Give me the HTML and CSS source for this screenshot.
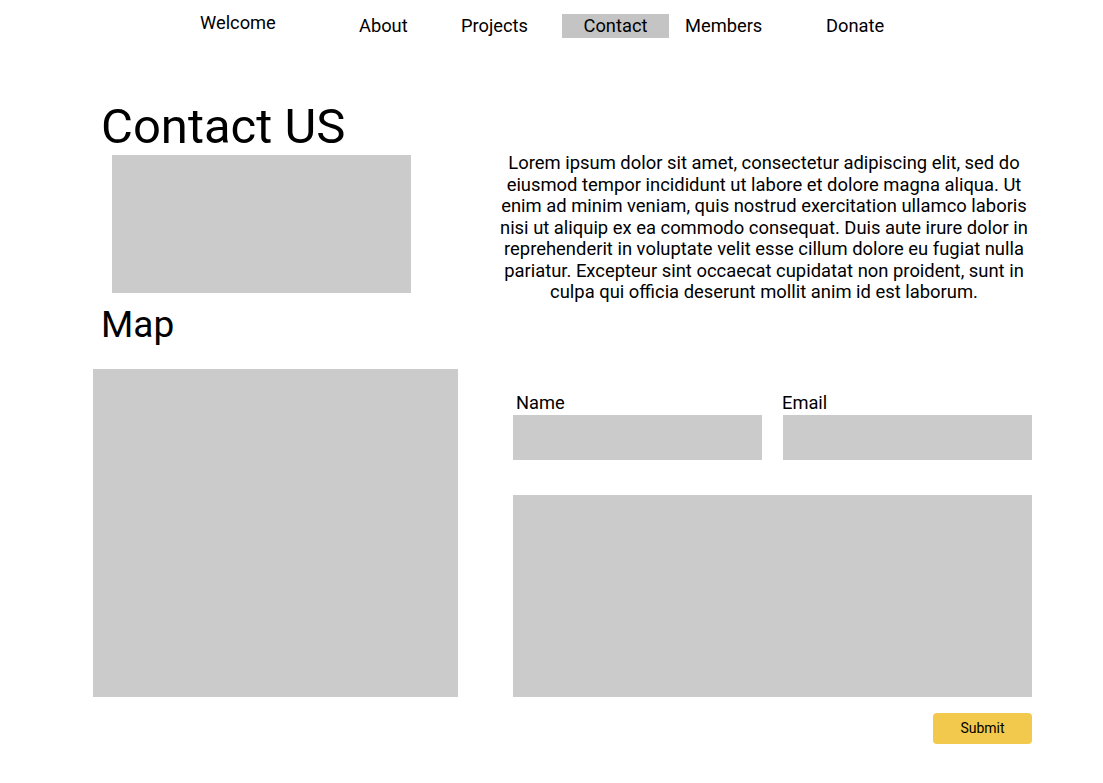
FILE: index.html
```html
<!DOCTYPE html>
<html lang="en">
<head>
<meta charset="utf-8">
<title>Contact US</title>
<link rel="stylesheet" href="styles.css">
</head>
<body>
<nav class="topnav">
  <a class="nav-link nav-brand" href="#">Welcome</a>
  <a class="nav-link" href="#">About</a>
  <a class="nav-link" href="#">Projects</a>
  <a class="nav-link nav-active" href="#">Contact</a>
  <a class="nav-link nav-members" href="#">Members</a>
  <a class="nav-link" href="#">Donate</a>
</nav>
<main class="page">
  <section class="intro">
    <div class="intro-left">
      <h1 class="title">Contact US</h1>
      <div class="photo"></div>
    </div>
    <p class="intro-text">Lorem ipsum dolor sit amet, consectetur adipiscing elit, sed do eiusmod tempor incididunt ut labore et dolore magna aliqua. Ut enim ad minim veniam, quis nostrud exercitation ullamco laboris nisi ut aliquip ex ea commodo consequat. Duis aute irure dolor in reprehenderit in voluptate velit esse cillum dolore eu fugiat nulla pariatur. Excepteur sint occaecat cupidatat non proident, sunt in culpa qui officia deserunt mollit anim id est laborum.</p>
  </section>
  <h2 class="map-title">Map</h2>
  <section class="contact-row">
    <div class="map"></div>
    <form class="contact-form">
      <div class="field-row">
        <label class="field">
          <span class="field-label">Name</span>
          <input class="field-input" type="text">
        </label>
        <label class="field">
          <span class="field-label field-label-tight">Email</span>
          <input class="field-input" type="email">
        </label>
      </div>
      <textarea class="message"></textarea>
      <div class="actions">
        <button class="submit" type="button">Submit</button>
      </div>
    </form>
  </section>
</main>
</body>
</html>
```

FILE: styles.css
```css
* {
  box-sizing: border-box;
}

html, body {
  margin: 0;
  padding: 0;
  background: #ffffff;
}

body {
  font-family: Roboto, "Liberation Sans", sans-serif;
  color: #000000;
  width: 1103px;
}

/* Navigation */
.topnav {
  display: grid;
  grid-template-columns: 159px 102px 101px 107px 157px auto;
  align-items: start;
  padding: 14px 0 0 200px;
  height: 38px;
}

.nav-link {
  display: block;
  font-size: 18.3px;
  color: #000000;
  text-decoration: none;
  height: 24px;
  line-height: 23px;
  padding-top: 0;
  white-space: nowrap;
}

.nav-brand {
  line-height: 18px;
}

.nav-active {
  background: #c4c4c4;
  text-align: center;
  line-height: 24px;
}

.nav-members {
  padding-left: 16px;
}

/* Page */
.page {
  padding-left: 93px;
}

.intro {
  display: flex;
  margin-top: 61px;
}

.intro-left {
  width: 403px;
  flex: none;
}

.title {
  margin: 0 0 0 8px;
  font-size: 49px;
  font-weight: 400;
  line-height: 56px;
}

.photo {
  margin-left: 19px;
  width: 299px;
  height: 138px;
  background: #cbcbcb;
}

.intro-text {
  margin: 0;
  padding-top: 53px;
  width: 536px;
  font-size: 18.4px;
  line-height: 21.5px;
  text-align: center;
}

.map-title {
  margin: 1px 0 0 8px;
  font-size: 37px;
  font-weight: 400;
  line-height: 42px;
}

.contact-row {
  display: flex;
  gap: 55px;
  margin-top: 23px;
}

.map {
  width: 365px;
  height: 328px;
  background: #cbcbcb;
  flex: none;
}

.contact-form {
  width: 519px;
  padding-top: 23px;
}

.field-row {
  display: flex;
  gap: 21px;
}

.field {
  display: flex;
  flex-direction: column;
  width: 249px;
}

.field-label {
  font-size: 18.3px;
  line-height: 22px;
  padding-left: 3px;
}

.field-label-tight {
  padding-left: 0;
  margin-left: -1px;
}

.field-input {
  display: block;
  margin-top: 1px;
  width: 249px;
  height: 45px;
  border: none;
  background: #cbcbcb;
  padding: 0;
}

.message {
  display: block;
  margin-top: 35px;
  width: 519px;
  height: 202px;
  border: none;
  background: #cbcbcb;
  resize: none;
  padding: 0;
}

.actions {
  display: flex;
  justify-content: flex-end;
  margin-top: 16px;
}

.submit {
  width: 99px;
  height: 31px;
  border: none;
  border-radius: 4px;
  background: #f2c94c;
  font-family: Roboto, "Liberation Sans", sans-serif;
  font-size: 14px;
  color: #000000;
  padding: 0;
}
```
